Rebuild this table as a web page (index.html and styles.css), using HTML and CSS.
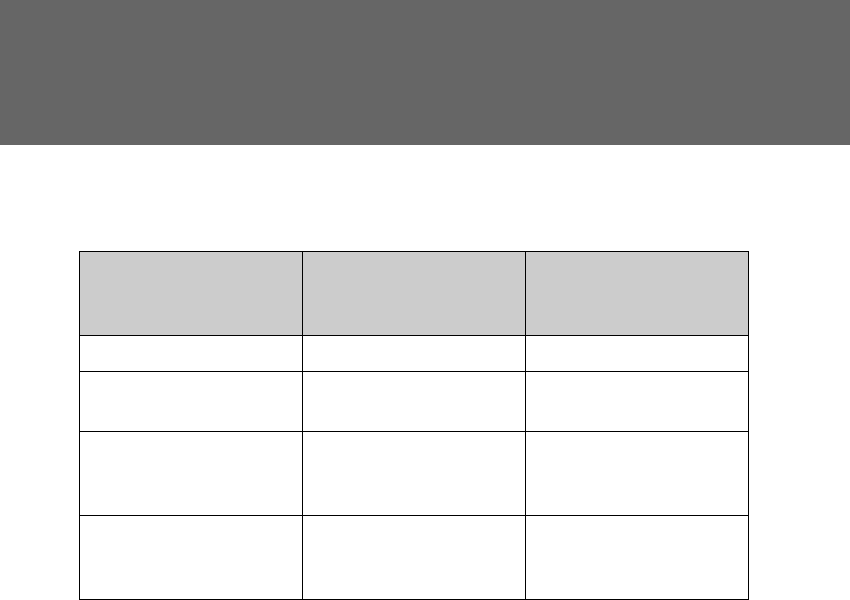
FILE: index.html
```html
<!DOCTYPE html>
<html lang="en">
<head>
<meta charset="utf-8">
<title>Table</title>
<link rel="stylesheet" href="styles.css">
</head>
<body>
<header class="banner"></header>
<main class="content">
  <div class="grid-table" role="table">
    <div class="cell head" role="columnheader"></div>
    <div class="cell head" role="columnheader"></div>
    <div class="cell head" role="columnheader"></div>
    <div class="cell" role="cell"></div>
    <div class="cell" role="cell"></div>
    <div class="cell" role="cell"></div>
    <div class="cell" role="cell"></div>
    <div class="cell" role="cell"></div>
    <div class="cell" role="cell"></div>
    <div class="cell" role="cell"></div>
    <div class="cell" role="cell"></div>
    <div class="cell" role="cell"></div>
    <div class="cell" role="cell"></div>
    <div class="cell" role="cell"></div>
    <div class="cell" role="cell"></div>
  </div>
</main>
</body>
</html>
```

FILE: styles.css
```css
html, body {
  margin: 0;
  padding: 0;
  background: #fff;
  font-family: "Liberation Sans", Arial, sans-serif;
}

.banner {
  display: block;
  height: 145px;
  background: #666666;
}

.content {
  padding: 106px 0 0 79px;
}

.grid-table {
  display: grid;
  width: max-content;
  grid-template-columns: 222px 222px 222px;
  grid-template-rows: 83px 35px 59px 83px 83px;
  gap: 1px;
  padding: 1px;
  background: #000;
}

.cell {
  background: #fff;
}

.cell.head {
  background: #cccccc;
}
```
